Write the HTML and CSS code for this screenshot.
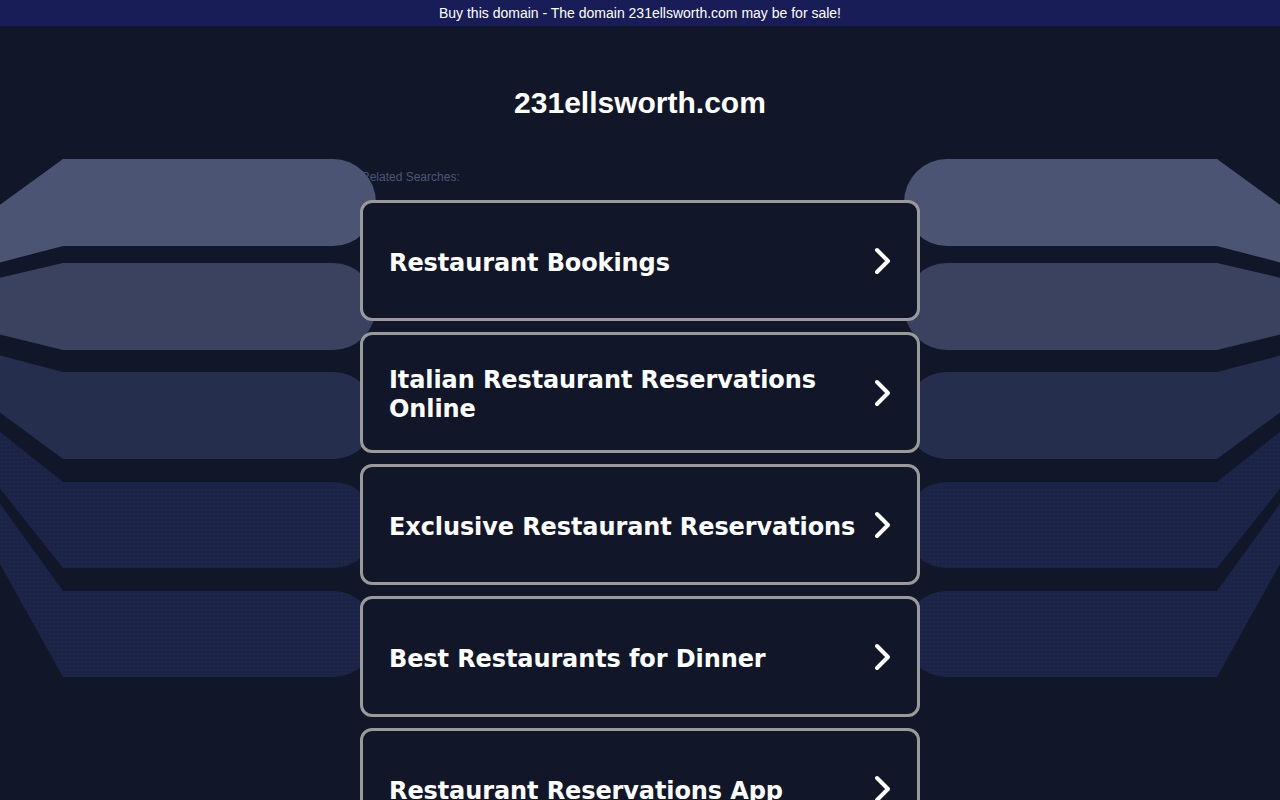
FILE: index.html
```html
<!DOCTYPE html>
<html lang="en">
<head>
<meta charset="utf-8">
<title>231ellsworth.com</title>
<link rel="stylesheet" href="styles.css">
</head>
<body>
<svg class="backdrop" width="1280" height="800" viewBox="0 0 1280 800" aria-hidden="true">
  <defs>
    <pattern id="dots" width="4" height="4" patternUnits="userSpaceOnUse">
      <rect width="4" height="4" fill="#1b2346"/>
      <rect x="1" y="1" width="1" height="1" fill="#232c52"/>
    </pattern>
    <g id="bands">
      <path fill="#4b5573" d="M-10 212 L63 159 L333 159 A43 43.5 0 0 1 333 246 L63 246 L-10 265 Z"/>
      <path fill="#3a4260" d="M-10 280 L63 263 L333 263 A43 43.5 0 0 1 333 350 L63 350 L-10 332 Z"/>
      <path fill="#262e4d" d="M-10 353 L63 372 L333 372 A43 43.5 0 0 1 333 459 L63 459 L-10 405 Z"/>
      <path fill="url(#dots)" d="M-10 424 L63 482 L333 482 A43 43 0 0 1 333 568 L63 568 L-10 476 Z"/>
      <path fill="url(#dots)" d="M-10 490 L63 591 L333 591 A43 43 0 0 1 333 677 L63 677 L-10 546 Z"/>
    </g>
  </defs>
  <use href="#bands"/>
  <use href="#bands" transform="translate(1280 0) scale(-1 1)"/>
</svg>

<div class="topbar">Buy this domain - The domain 231ellsworth.com may be for sale!</div>

<main class="main">
  <h1 class="domain">231ellsworth.com</h1>
  <div class="related">Related Searches:</div>
  <ul class="links">
    <li class="card"><span class="card-text">Restaurant Bookings</span><svg class="chev" width="20" height="28" viewBox="0 0 20 28"><path d="M4 3 L15 14 L4 25"/></svg></li>
    <li class="card"><span class="card-text">Italian Restaurant Reservations Online</span><svg class="chev" width="20" height="28" viewBox="0 0 20 28"><path d="M4 3 L15 14 L4 25"/></svg></li>
    <li class="card"><span class="card-text">Exclusive Restaurant Reservations</span><svg class="chev" width="20" height="28" viewBox="0 0 20 28"><path d="M4 3 L15 14 L4 25"/></svg></li>
    <li class="card"><span class="card-text">Best Restaurants for Dinner</span><svg class="chev" width="20" height="28" viewBox="0 0 20 28"><path d="M4 3 L15 14 L4 25"/></svg></li>
    <li class="card"><span class="card-text">Restaurant Reservations App</span><svg class="chev" width="20" height="28" viewBox="0 0 20 28"><path d="M4 3 L15 14 L4 25"/></svg></li>
  </ul>
</main>
</body>
</html>
```

FILE: styles.css
```css
html, body {
  margin: 0;
  padding: 0;
}

body {
  background: #111729;
  font-family: "Liberation Sans", Arial, sans-serif;
  color: #fff;
  position: relative;
  min-height: 800px;
}

.backdrop {
  position: absolute;
  top: 0;
  left: 0;
  pointer-events: none;
}

.topbar {
  position: relative;
  z-index: 2;
  height: 26px;
  line-height: 26px;
  background: #181d57;
  color: #fff;
  text-align: center;
  font-size: 14px;
}

.main {
  width: 560px;
  margin: 0 auto;
  padding-top: 60px;
}

.domain {
  margin: 0;
  text-align: center;
  font-family: "Liberation Sans", Arial, sans-serif;
  font-size: 30px;
  font-weight: bold;
  line-height: 34px;
  color: #fff;
}

.related {
  margin-top: 50px;
  font-size: 12px;
  line-height: 14px;
  color: #4d5675;
  padding-left: 1px;
}

.links {
  list-style: none;
  margin: 16px 0 0;
  padding: 0;
  display: flex;
  flex-direction: column;
  gap: 11px;
}

.card {
  position: relative;
  z-index: 1;
  box-sizing: border-box;
  height: 121px;
  border: 3px solid #9a9a9a;
  border-radius: 12px;
  background: #111729;
  display: flex;
  align-items: center;
  justify-content: space-between;
  gap: 4px;
  padding: 0 24px 0 26px;
}

.card-text {
  font-family: "DejaVu Sans", Verdana, sans-serif;
  font-weight: bold;
  font-size: 24px;
  letter-spacing: -0.1px;
  line-height: 29px;
  color: #fff;
  padding-top: 5px;
}

.chev {
  flex: none;
}

.chev path {
  fill: none;
  stroke: #fff;
  stroke-width: 4;
  stroke-linecap: round;
  stroke-linejoin: round;
}
```
